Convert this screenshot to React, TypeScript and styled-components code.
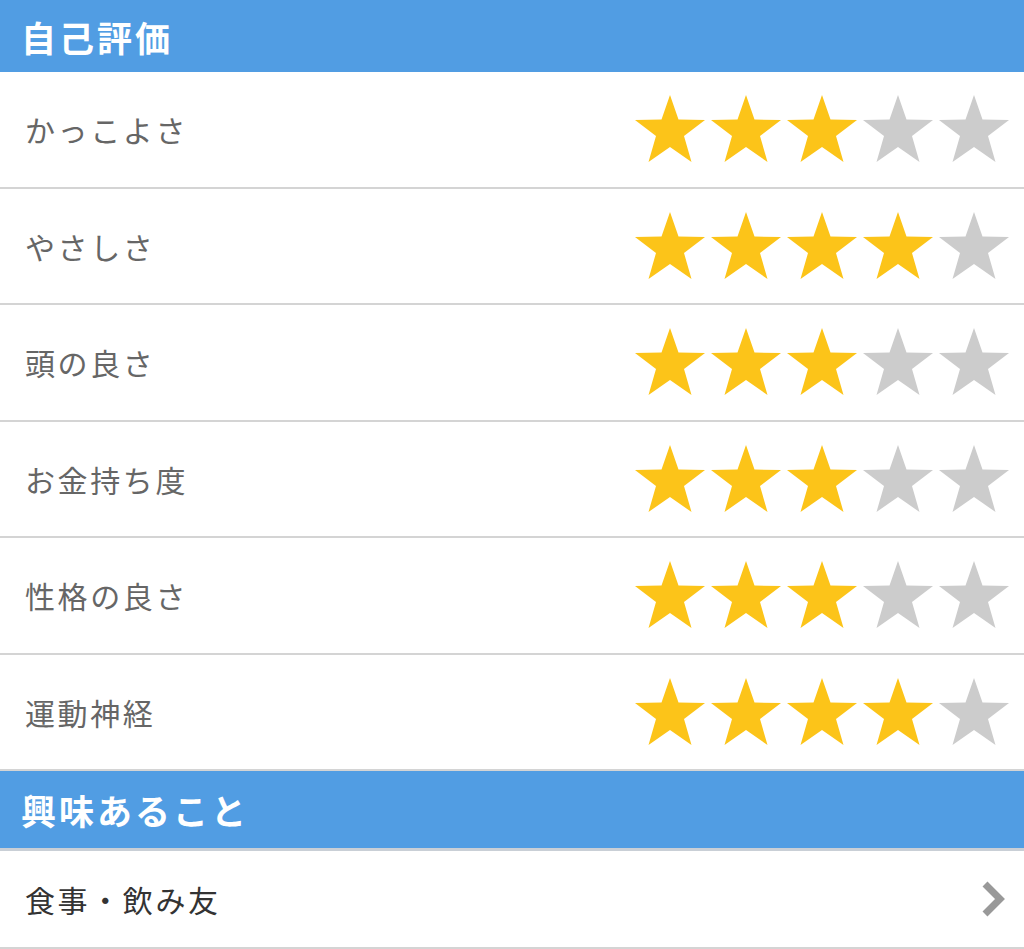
import { createGlobalStyle, styled } from "styled-components";

const GlobalStyle = createGlobalStyle`
  html, body {
    margin: 0;
    padding: 0;
    background: #ffffff;
  }
  body {
    font-family: "Noto Sans CJK JP", "Noto Sans", sans-serif;
  }
`;

const Page = styled.div`
  width: 1024px;
  display: flex;
  flex-direction: column;
`;

const SectionHeader = styled.div<{ $top?: boolean }>`
  height: ${(props) => (props.$top ? "72px" : "77px")};
  background-color: #519de3;
  display: flex;
  align-items: center;
  padding-left: 21px;
  color: #ffffff;
  font-size: 35px;
  font-weight: 700;
  letter-spacing: 3px;
  border-bottom: ${(props) => (props.$top ? "none" : "3px solid #c9cfd6")};
`;

const RatingRow = styled.div`
  height: 114.5px;
  display: flex;
  align-items: center;
  justify-content: space-between;
  padding: 0 14px 0 25px;
  border-bottom: 2px solid #d4d4d4;
`;

const Label = styled.div`
  font-size: 30px;
  font-weight: 400;
  color: #666666;
  letter-spacing: 2.6px;
`;

const Stars = styled.div`
  display: flex;
  gap: 4px;
`;

const LinkRow = styled.div`
  height: 96px;
  display: flex;
  align-items: center;
  justify-content: space-between;
  padding: 0 18px 0 25px;
  border-bottom: 2px solid #d4d4d4;
`;

const LinkLabel = styled.div`
  font-size: 30px;
  font-weight: 400;
  color: #333333;
  letter-spacing: 2.6px;
`;

interface IStarProps {
  filled: boolean;
}

function Star({ filled }: IStarProps) {
  return (
    <svg width="72" height="70" viewBox="0 0 72 70">
      <polygon
        points="36,1 44.5,25.5 71,26 50,42 57.5,68 36,53 14.5,68 22,42 1,26 27.5,25.5"
        fill={filled ? "#fcc419" : "#cccccc"}
      />
    </svg>
  );
}

const ratings = [
  { label: "かっこよさ", value: 3 },
  { label: "やさしさ", value: 4 },
  { label: "頭の良さ", value: 3 },
  { label: "お金持ち度", value: 3 },
  { label: "性格の良さ", value: 3 },
  { label: "運動神経", value: 4 },
];

function App() {
  return (
    <Page>
      <GlobalStyle />
      <SectionHeader $top>自己評価</SectionHeader>
      {ratings.map((r) => (
        <RatingRow key={r.label}>
          <Label>{r.label}</Label>
          <Stars>
            {[0, 1, 2, 3, 4].map((i) => (
              <Star key={i} filled={i < r.value} />
            ))}
          </Stars>
        </RatingRow>
      ))}
      <SectionHeader>興味あること</SectionHeader>
      <LinkRow>
        <LinkLabel>食事・飲み友</LinkLabel>
        <svg width="26" height="38" viewBox="0 0 26 38">
          <polyline
            points="5,4 20,19 5,34"
            fill="none"
            stroke="#999999"
            strokeWidth="7"
            strokeLinejoin="miter"
          />
        </svg>
      </LinkRow>
    </Page>
  );
}

export default App;
